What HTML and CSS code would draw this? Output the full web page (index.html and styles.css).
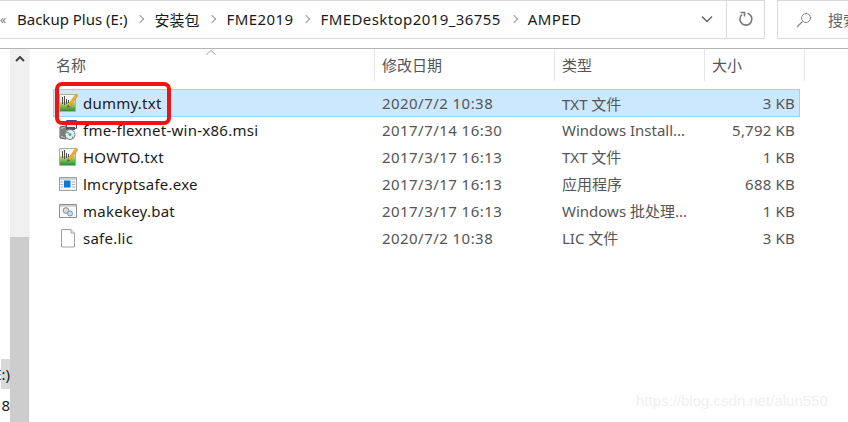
FILE: index.html
```html
<!DOCTYPE html>
<html lang="en">
<head>
    <meta charset="UTF-8">
    <meta name="viewport" content="width=device-width, initial-scale=1.0">
    <title>AMPED</title>
    <link rel="stylesheet" href="styles.css">
</head>
<body>
    <svg class="defs" width="0" height="0">
        <linearGradient id="greenFill" x1="0" y1="0" x2="0" y2="1">
            <stop offset="0" stop-color="#c8e07a"/>
            <stop offset="1" stop-color="#2f8f2f"/>
        </linearGradient>
        <symbol id="icoTxt" viewBox="0 0 20 20">
            <path d="M1.500 1.500h16v17h-16z" fill="#f2f4ee" stroke="#a9b0a4"/>
            <path d="M2 9h15v9H2z" fill="url(#greenFill)"/>
            <path d="M4.500 4v7M6.500 3v9M8.500 6v5M10.500 7v3" stroke="#4d4d4d"/>
            <path d="M9 15l1-3 8-11 2 1.500-8 11z" fill="#eeb02e" stroke="#c07e16" stroke-width=".5"/>
            <path d="M9 15l1-3 2 1.500z" fill="#555"/>
        </symbol>
        <symbol id="icoMsi" viewBox="0 0 20 20">
            <path d="M8.500 .5h10v8h-10z" fill="#e3e8f2" stroke="#2f4f9c"/>
            <path d="M10 2h7v2h-7z" fill="#2f5fc4"/>
            <path d="M2 7l6-1v13l-6-1z" fill="#b5b5b5" stroke="#555"/>
            <path d="M4 9v7M6 8v9" stroke="#444"/>
            <path d="M8 7h9v3H8z" fill="#555"/>
            <circle cx="12" cy="14.500" r="5" fill="#e4eef2" stroke="#6d7a80"/>
            <circle cx="12" cy="14.500" r="1.500" fill="#57a3c9"/>
            <path d="M8 12l3 1M14 17l2 1" stroke="#6bb25a" stroke-width="1.500"/>
        </symbol>
        <symbol id="icoExe" viewBox="0 0 20 20">
            <path d="M1.500 3.500h17v13h-17z" fill="#f4f6f8" stroke="#9a9ea3"/>
            <path d="M2 4h16v2H2z" fill="#cdd3da"/>
            <path d="M6 6.500h6.500v7H6z" fill="#0a78d7"/>
            <path d="M2.500 8h2.500M2.500 10.500h2.500M2.500 13h2.500M14 8h3M14 10.500h3M14 13h3" stroke="#a6b2be"/>
        </symbol>
        <symbol id="icoBat" viewBox="0 0 20 20">
            <path d="M1.500 3.500h17v13h-17z" fill="#f6f6f6" stroke="#8b8f94"/>
            <path d="M2 4h16v1.500H2z" fill="#c9c9c9"/>
            <circle cx="8" cy="9.500" r="2.800" fill="#dcdcdc" stroke="#888"/>
            <circle cx="12" cy="12.500" r="2.500" fill="#c5dcee" stroke="#6d9abb"/>
        </symbol>
        <symbol id="icoFile" viewBox="0 0 20 20">
            <path d="M3.500 1.500h9.500l3.500 3.500v14h-13z" fill="#fff" stroke="#a0a0a0"/>
            <path d="M13 1.500v3.500h3.500" fill="#f0f0f0" stroke="#a0a0a0"/>
        </symbol>
    </svg>

    <div class="addressRow">
        <div class="addressBar">
            <span class="more">«</span>
            <span class="crumb">Backup Plus (E:)</span>
            <span class="sep"></span>
            <span class="crumb">安装包</span>
            <span class="sep"></span>
            <span class="crumb wide">FME2019</span>
            <span class="sep"></span>
            <span class="crumb wide">FMEDesktop2019_36755</span>
            <span class="sep"></span>
            <span class="crumb wide">AMPED</span>
            <div class="dropBtn">
                <svg width="12" height="8" viewBox="0 0 12 8"><path d="M1 1.500l5 5 5-5" fill="none" stroke="#666" stroke-width="1.500"/></svg>
            </div>
            <div class="refreshBtn">
                <svg width="16" height="16" viewBox="0 0 16 16"><path d="M9.500 2.300A6 6 0 1 1 4 3.500" fill="none" stroke="#777" stroke-width="1.600"/><path d="M2.500 1.500h4v4" fill="none" stroke="#777" stroke-width="1.600"/></svg>
            </div>
        </div>
        <div class="searchBox">
            <svg class="searchIco" width="16" height="16" viewBox="0 0 16 16"><circle cx="10" cy="6" r="4.500" fill="none" stroke="#888"/><path d="M6.500 9.500L1 15" stroke="#888" stroke-width="1.200"/></svg>
            <span class="searchText">搜索</span>
        </div>
    </div>

    <div class="content">
        <div class="navEdge">
            <div class="navPick">E:)</div>
            <div class="navNum">8</div>
        </div>
        <div class="scrollbar">
            <div class="scrollBtn">
                <svg width="10" height="6" viewBox="0 0 10 6"><path d="M1 5l4-4 4 4" fill="none" stroke="#444" stroke-width="2"/></svg>
            </div>
            <div class="scrollThumb"></div>
        </div>
        <div class="files">
            <div class="header">
                <div class="col colName">名称
                    <svg class="sortArrow" width="10" height="5" viewBox="0 0 10 5"><path d="M.5 4.500L5 .5l4.500 4" fill="none" stroke="#999"/></svg>
                </div>
                <div class="col colDate">修改日期</div>
                <div class="col colType">类型</div>
                <div class="col colSize">大小</div>
            </div>
            <div class="row selected">
                <div class="cellName"><svg class="ico"><use href="#icoTxt"/></svg>dummy.txt</div>
                <div class="cellDate">2020/7/2 10:38</div>
                <div class="cellType">TXT 文件</div>
                <div class="cellSize">3 KB</div>
            </div>
            <div class="row">
                <div class="cellName"><svg class="ico"><use href="#icoMsi"/></svg>fme-flexnet-win-x86.msi</div>
                <div class="cellDate">2017/7/14 16:30</div>
                <div class="cellType">Windows Install...</div>
                <div class="cellSize">5,792 KB</div>
            </div>
            <div class="row">
                <div class="cellName"><svg class="ico"><use href="#icoTxt"/></svg>HOWTO.txt</div>
                <div class="cellDate">2017/3/17 16:13</div>
                <div class="cellType">TXT 文件</div>
                <div class="cellSize">1 KB</div>
            </div>
            <div class="row">
                <div class="cellName"><svg class="ico"><use href="#icoExe"/></svg>lmcryptsafe.exe</div>
                <div class="cellDate">2017/3/17 16:13</div>
                <div class="cellType">应用程序</div>
                <div class="cellSize">688 KB</div>
            </div>
            <div class="row">
                <div class="cellName"><svg class="ico"><use href="#icoBat"/></svg>makekey.bat</div>
                <div class="cellDate">2017/3/17 16:13</div>
                <div class="cellType">Windows 批处理...</div>
                <div class="cellSize">1 KB</div>
            </div>
            <div class="row">
                <div class="cellName"><svg class="ico"><use href="#icoFile"/></svg>safe.lic</div>
                <div class="cellDate">2020/7/2 10:38</div>
                <div class="cellType">LIC 文件</div>
                <div class="cellSize">3 KB</div>
            </div>
            <div class="redBox"></div>
        </div>
    </div>

    <div class="watermark">https://blog.csdn.net/alun550</div>
</body>
</html>
```

FILE: styles.css
```css
* {
    margin: 0;
    padding: 0;
    box-sizing: border-box;
}

body {
    width: 848px;
    height: 422px;
    overflow: hidden;
    background-color: white;
    font-family: "Noto Sans", "Noto Sans CJK SC", sans-serif;
    font-size: 15px;
    color: #1a1a1a;
    position: relative;
}

.defs {
    position: absolute;
}

/* address bar */
.addressRow {
    height: 49px;
    display: flex;
    align-items: flex-start;
    border-bottom: 1px solid #b4b4b4;
}

.addressBar {
    width: 765px;
    flex-shrink: 0;
    height: 39px;
    display: flex;
    align-items: center;
    border-top: 1px solid #d9d9d9;
    border-bottom: 1px solid #d9d9d9;
    border-right: 1px solid #d9d9d9;
    padding-bottom: 1px;
}

.more {
    width: 17px;
    color: #777;
    font-size: 12px;
}

.crumb.wide {
    letter-spacing: .42px;
}

.sep {
    width: 6px;
    height: 6px;
    margin: 0 11px 0 10px;
    border-top: 1.500px solid #999;
    border-right: 1.500px solid #999;
    transform: rotate(45deg);
}

.dropBtn {
    margin-left: auto;
    width: 38px;
    height: 100%;
    display: flex;
    align-items: center;
    justify-content: center;
}

.refreshBtn {
    width: 38px;
    height: 38px;
    border-left: 1px solid #d9d9d9;
    display: flex;
    align-items: center;
    justify-content: center;
}

.searchBox {
    margin-left: 12px;
    flex: 1;
    min-width: 0;
    overflow: hidden;
    height: 39px;
    display: flex;
    align-items: center;
    gap: 16px;
    padding-left: 18px;
    border-top: 1px solid #d9d9d9;
    border-bottom: 1px solid #d9d9d9;
    border-left: 1px solid #d9d9d9;
    color: #666;
    white-space: nowrap;
}

.searchIco, .searchText {
    flex-shrink: 0;
}

/* left edge and scrollbar */
.content {
    display: flex;
    height: 373px;
}

.navEdge {
    width: 10px;
    overflow: hidden;
    padding-top: 310px;
    direction: rtl;
    white-space: nowrap;
}

.navPick {
    width: 9px;
    height: 30px;
    line-height: 30px;
    background-color: #d9d9d9;
    color: #1a1a1a;
    direction: ltr;
    display: flex;
    justify-content: flex-end;
}

.navNum {
    width: 9px;
    margin-top: 4px;
    line-height: 24px;
    direction: ltr;
    display: flex;
    justify-content: flex-end;
}

.scrollbar {
    width: 20px;
    background-color: #f0f0f0;
    display: flex;
    flex-direction: column;
    border-right: 1px solid #f5f5f5;
}

.scrollBtn {
    height: 19px;
    display: flex;
    align-items: center;
    justify-content: center;
}

.scrollThumb {
    width: 19px;
    height: 185px;
    margin-top: auto;
    background-color: #cdcdcd;
}

/* file list */
.files {
    flex: 1;
    padding-left: 23px;
    position: relative;
}

.header {
    height: 40px;
    display: flex;
    color: #555;
}

.col {
    height: 32px;
    line-height: 33px;
    padding-left: 3px;
    border-right: 1px solid #e5e5e5;
    position: relative;
}

.colName { width: 322px; }
.colDate { width: 180px; padding-left: 7px; }
.colType { width: 150px; padding-left: 7px; }
.colSize { width: 100px; padding-left: 7px; }

.sortArrow {
    position: absolute;
    left: 153px;
    top: 1px;
}

.row {
    width: 747px;
    height: 27px;
    display: flex;
    align-items: center;
    border: 1px solid transparent;
    color: #555;
}

.row.selected {
    height: 28px;
    margin-bottom: -1px;
    background-color: #cce8ff;
    border-color: #99d1ff;
}

.cellName {
    width: 321px;
    display: flex;
    align-items: center;
    color: #1a1a1a;
    padding-left: 4px;
    letter-spacing: .25px;
}

.ico {
    width: 20px;
    height: 20px;
    margin-right: 5px;
    flex-shrink: 0;
}

.cellDate { width: 180px; padding-left: 7px; letter-spacing: .45px; }
.cellType { width: 150px; padding-left: 7px; white-space: nowrap; }
.cellSize { width: 90px; text-align: right; letter-spacing: .2px; }

.redBox {
    position: absolute;
    left: 25px;
    top: 33px;
    width: 116px;
    height: 43px;
    border: 4px solid #f01410;
    border-radius: 7px;
}

.watermark {
    position: absolute;
    left: 636px;
    top: 392px;
    font-family: "Liberation Sans", sans-serif;
    font-size: 15px;
    color: #efefef;
}
```
